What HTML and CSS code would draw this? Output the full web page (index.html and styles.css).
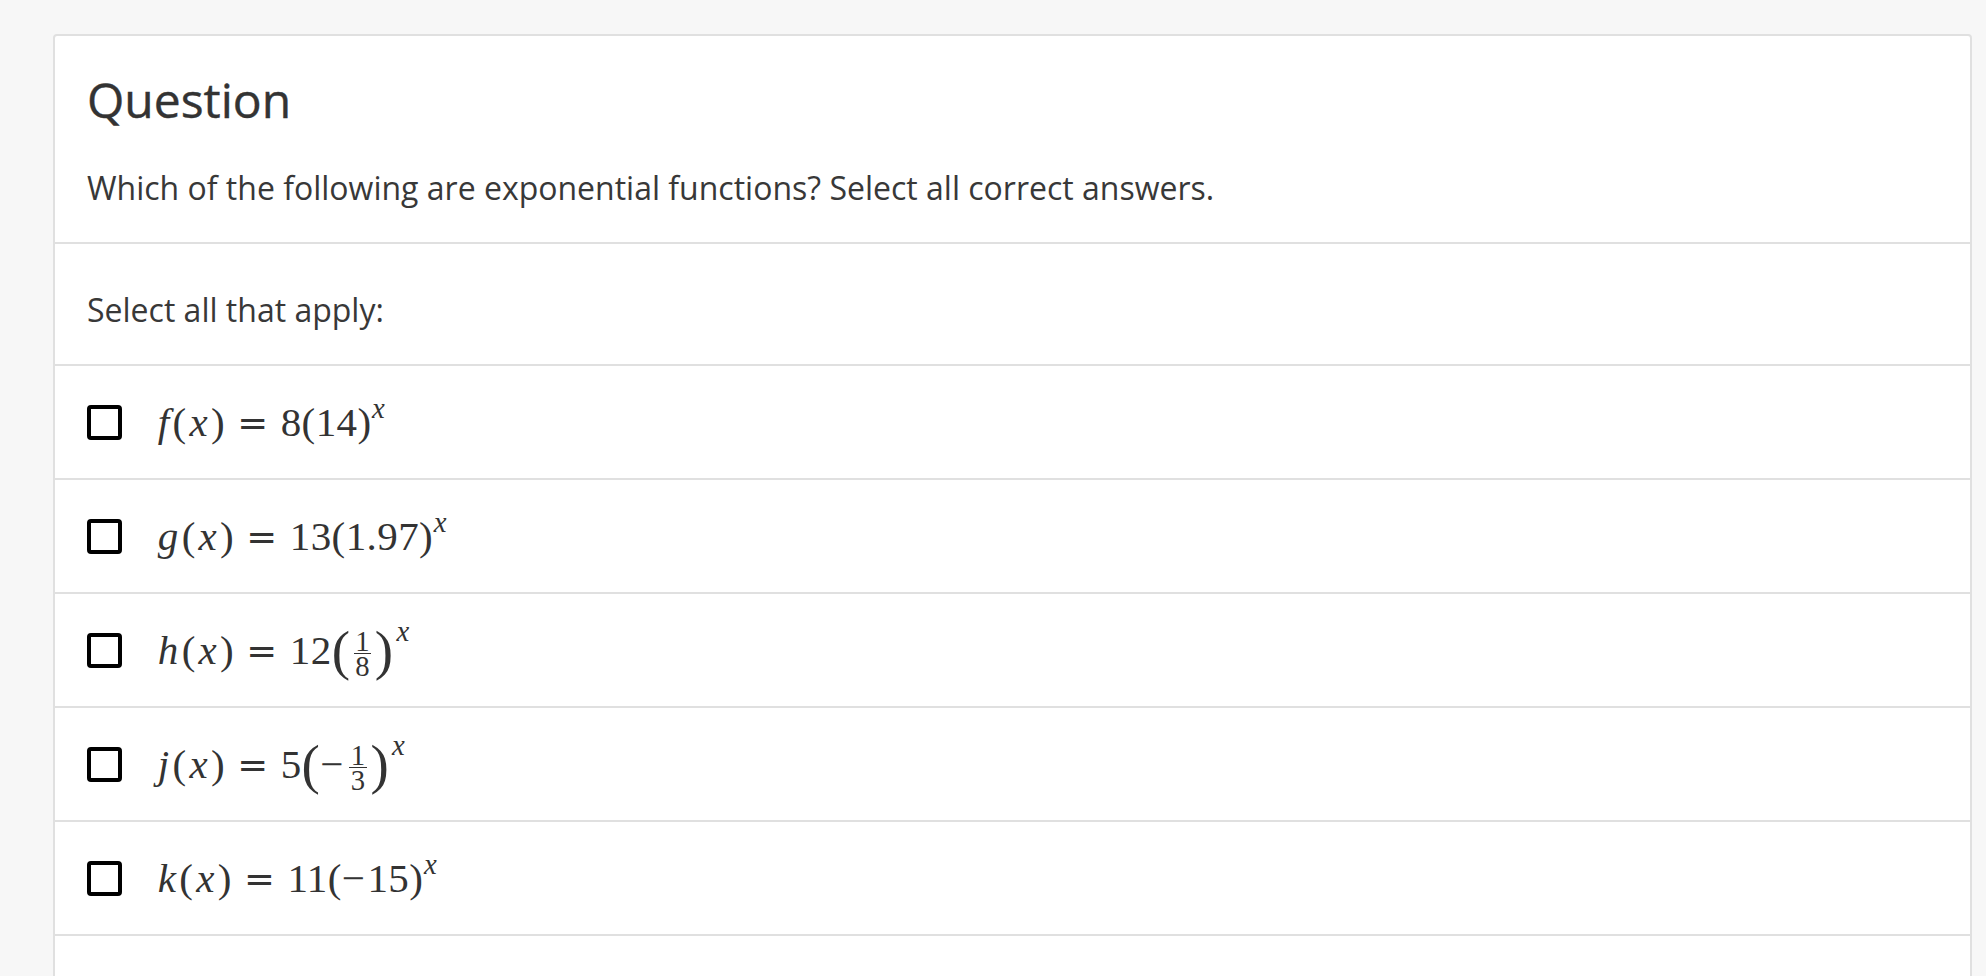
FILE: index.html
```html
<!DOCTYPE html>
<html lang="en">
<head>
<meta charset="utf-8">
<title>Question</title>
<link rel="stylesheet" href="styles.css">
</head>
<body>
<div class="page">
  <div class="card">
    <div class="header">
      <h1 class="title">Question</h1>
      <p class="prompt">Which of the following are exponential functions? Select all correct answers.</p>
    </div>
    <div class="instructions">Select all that apply:</div>
    <div class="option">
      <span class="checkbox"></span>
      <span class="math"><span class="mi">f</span>(<span class="mi">x</span>)<span class="rel">=</span>8(14)<sup><span class="mi">x</span></sup></span>
    </div>
    <div class="option">
      <span class="checkbox"></span>
      <span class="math"><span class="mi">g</span>(<span class="mi">x</span>)<span class="rel">=</span>13(1.97)<sup><span class="mi">x</span></sup></span>
    </div>
    <div class="option">
      <span class="checkbox"></span>
      <span class="math"><span class="mi">h</span>(<span class="mi">x</span>)<span class="rel">=</span>12<span class="bigp">(</span><span class="frac"><span class="num">1</span><span class="den">8</span></span><span class="bigp">)</span><sup class="high"><span class="mi">x</span></sup></span>
    </div>
    <div class="option">
      <span class="checkbox"></span>
      <span class="math"><span class="mi">j</span>(<span class="mi">x</span>)<span class="rel">=</span>5<span class="bigp">(</span><span class="minus">−</span><span class="frac"><span class="num">1</span><span class="den">3</span></span><span class="bigp">)</span><sup class="high"><span class="mi">x</span></sup></span>
    </div>
    <div class="option">
      <span class="checkbox"></span>
      <span class="math"><span class="mi">k</span>(<span class="mi">x</span>)<span class="rel">=</span>11(<span class="minus">−</span>15)<sup><span class="mi">x</span></sup></span>
    </div>
    <div class="footer"></div>
  </div>
</div>
</body>
</html>
```

FILE: styles.css
```css
html, body {
  margin: 0;
  padding: 0;
  background: #f7f7f7;
  height: 100%;
  overflow: hidden;
}

body {
  font-family: "Open Sans", "Liberation Sans", sans-serif;
  color: #383838;
}

.page {
  padding: 34px 14px 0 53px;
}

.card {
  background: #ffffff;
  border: 2px solid #e0e0e0;
  border-radius: 4px 4px 0 0;
}

.header {
  padding: 40px 32px 38px 32px;
  border-bottom: 2px solid #e0e0e0;
}

.title {
  margin: 0;
  font-size: 48px;
  font-weight: 400;
  line-height: 48px;
  color: #333333;
  -webkit-text-stroke: 0.4px #333333;
}

.prompt {
  margin: 48px 0 0 0;
  font-size: 32px;
  line-height: 32px;
}

.instructions {
  padding: 50px 32px 38px 32px;
  font-size: 32px;
  line-height: 32px;
  border-bottom: 2px solid #e0e0e0;
}

.option {
  display: flex;
  align-items: center;
  height: 112px;
  padding-left: 32px;
  border-bottom: 2px solid #e0e0e0;
}

.checkbox {
  flex: none;
  width: 27px;
  height: 27px;
  border: 4px solid #000000;
  border-radius: 4px;
  margin-right: 33px;
}

.math {
  font-family: "Liberation Serif", "Times New Roman", serif;
  font-size: 41px;
  line-height: 1;
  color: #333333;
  letter-spacing: 0.01em;
  white-space: nowrap;
}

.mi {
  font-family: "Liberation Serif", "Times New Roman", serif;
  font-style: italic;
  margin: 0 0.07em;
}

.rel {
  font-family: "DejaVu Serif", "Liberation Serif", serif;
  font-size: 0.9em;
  margin: 0 0.33em;
}

.minus {
  margin-right: 0.05em;
}

.math sup {
  display: inline-block;
  font-size: 0.7em;
  line-height: 1;
  vertical-align: 0.62em;
  margin: -40px 0 -40px 0.02em;
}

.math sup .mi {
  margin: 0;
}

.math sup.high {
  vertical-align: 0.8em;
  margin-left: 0.1em;
}

.bigp {
  display: inline-block;
  font-size: 1.34em;
  line-height: 1;
  vertical-align: -0.095em;
  margin: -40px 0;
}

.frac {
  display: inline-flex;
  flex-direction: column;
  align-items: stretch;
  font-size: 0.7em;
  vertical-align: 13px;
  margin: -40px 0.12em;
  text-align: center;
}

.frac .num {
  line-height: 20px;
  border-bottom: 1.5px solid #333333;
  padding: 0 0.05em 2px;
}

.frac .den {
  line-height: 20px;
  padding-top: 2px;
}

.footer {
  height: 60px;
}
```
